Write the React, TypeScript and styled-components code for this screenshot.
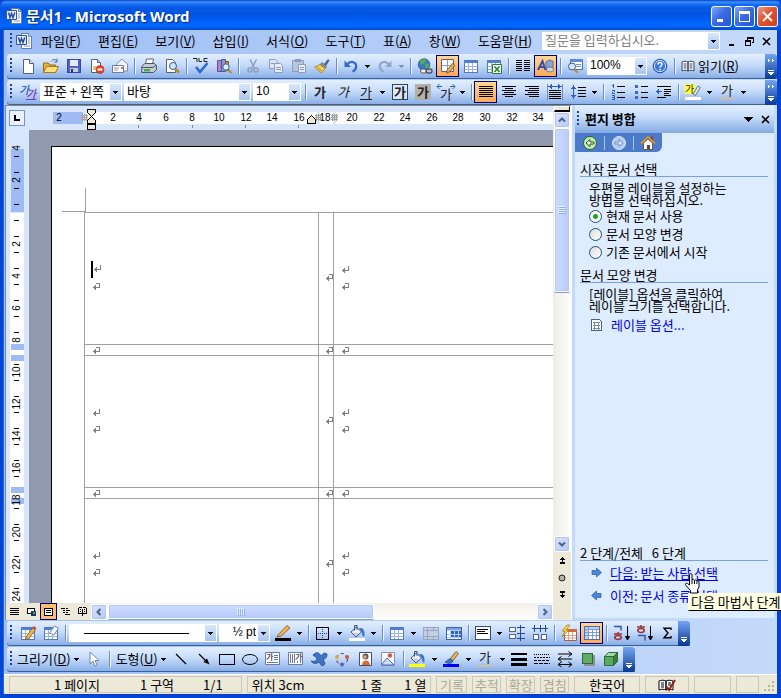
import React, { useEffect, useRef, useState } from "react";
import styled, { createGlobalStyle, css } from "styled-components";

const UI = `"Noto Sans CJK KR", "Liberation Sans", sans-serif`;
const LATIN = `"Liberation Sans", "Noto Sans CJK KR", sans-serif`;

const GlobalStyle = createGlobalStyle`
  html, body { margin: 0; padding: 0; overflow: hidden; }
  *, *::before, *::after { box-sizing: border-box; }
  body { font-family: ${UI}; font-size: 13px; line-height: 16px; color: #000; }
  button, input, select { font: inherit; color: inherit; margin: 0; padding: 0; }
  svg { flex: none; }
`;

/* ---------- window ---------- */

const Frame = styled.div`
  height: 100vh;
  display: flex;
  flex-direction: column;
  overflow: hidden;
  background: #0046d5;
`;

const TitleBar = styled.header`
  flex: none;
  height: 30px;
  display: flex;
  align-items: center;
  gap: 4px;
  padding: 2px 5px 0 6px;
  border-radius: 7px 7px 0 0;
  background: linear-gradient(180deg, #0a3fc4 0, #3b93ff 2px, #1a6ff5 4px, #0558e3 8px, #0054e3 14px, #0062fb 22px, #0068ff 26px, #0148cf 30px);
`;

const Title = styled.h1`
  flex: 1;
  margin: 0;
  font: 700 15px/20px "Noto Sans", ${UI};
  color: #fff;
  text-shadow: 1px 1px 1px #0a2a80;
  white-space: nowrap;
`;

const CaptionButton = styled.button<{ $close?: boolean }>`
  width: 21px;
  height: 21px;
  margin-right: -2px;
  border: 1px solid #fff;
  border-radius: 3px;
  display: grid;
  place-items: center;
  background: ${(p) =>
    p.$close
      ? "linear-gradient(135deg,#f09a84 0,#e4532f 45%,#cf3f1c 100%)"
      : "linear-gradient(135deg,#7fa6f5 0,#3a6ce5 45%,#2456d8 100%)"};
`;

const Client = styled.div`
  flex: 1;
  min-height: 0;
  display: flex;
  flex-direction: column;
  margin: 0 4px 4px;
  background: linear-gradient(90deg, #9ebef5, #c4dafa);
  box-shadow: -1px 0 0 #1a6af0, 1px 0 0 #0a3fd0, 0 1px 0 #0838c8;
`;

/* ---------- bars ---------- */

const MenuBar = styled.nav`
  flex: none;
  height: 24px;
  display: flex;
  align-items: center;
  padding: 0 2px 2px 4px;
`;

const Grip = styled.span`
  flex: none;
  width: 3px;
  height: 16px;
  margin: 0 3px 0 2px;
  background: radial-gradient(circle at 1px 1px, #27417f 1px, transparent 1px) 0 0 / 3px 4px;
`;

const MenuItem = styled.button`
  flex: none;
  height: 20px;
  border: 0;
  padding: 0 8px 0 9px;
  background: none;
  white-space: nowrap;
`;

const Ask = styled.div`
  flex: 1;
  max-width: 178px;
  height: 18px;
  margin: 0 4px 0 auto;
  display: flex;
  background: #fff;
`;

const AskInput = styled.input`
  flex: 1;
  min-width: 0;
  border: 0;
  padding: 0 3px 2px;
  background: transparent;
  &::placeholder { color: #808080; opacity: 1; }
`;

const DropButton = styled.button`
  width: 11px;
  border: 0;
  margin: 1px;
  background: linear-gradient(#d8e8fd, #a9c5f0);
  display: grid;
  place-items: center;
`;

const ChildButton = styled.button`
  width: 17px;
  height: 16px;
  border: 0;
  background: none;
  display: grid;
  place-items: center;
`;

const Docks = styled.div`
  flex: none;
  display: flex;
  flex-direction: column;
  align-items: flex-start;
  gap: 1px;
`;

const BottomDocks = styled(Docks)`
  padding: 1px 0 2px;
`;

const Toolbar = styled.div<{ $wide?: boolean }>`
  height: 25px;
  margin-left: 3px;
  display: flex;
  align-items: stretch;
  align-self: ${(p) => (p.$wide ? "stretch" : "flex-start")};
  border-radius: 3px 0 0 3px;
  background: linear-gradient(#e3effe 0, #c9defb 40%, #a3c2f0 75%, #83aae4 100%);
  box-shadow: inset 0 -1px 0 #3b619c;
`;

const Tools = styled.div`
  display: flex;
  align-items: center;
  padding-bottom: 1px;
  padding-left: 1px;
`;

const Tool = styled.button<{ $on?: boolean }>`
  flex: none;
  width: 23px;
  height: 22px;
  border: 1px solid transparent;
  background: none;
  display: grid;
  place-items: center;
  ${(p) =>
    p.$on &&
    css`
      border-color: #000080;
      background: linear-gradient(#ffd794, #fda85a);
    `}
`;

const CaretTool = styled.button`
  flex: none;
  width: 11px;
  height: 22px;
  border: 0;
  background: none;
  display: grid;
  place-items: center;
`;

const Sep = styled.span`
  flex: none;
  width: 2px;
  height: 16px;
  margin: 0 1px 0 3px;
  border-left: 1px solid #6a8ccb;
  border-right: 1px solid #f1f9ff;
`;

const TextTool = styled.button<{ $lead?: boolean }>`
  flex: none;
  display: flex;
  align-items: center;
  gap: 3px;
  height: 22px;
  padding: 0 4px 0 ${(p) => (p.$lead ? 1 : 4)}px;
  border: 0;
  background: none;
  white-space: nowrap;
`;

const Overflow = styled.button`
  flex: none;
  width: 12px;
  margin-left: auto;
  border: 0;
  border-radius: 0 3px 3px 0;
  background: linear-gradient(#75a6f1, #3f6fc4 50%, #053995);
  display: grid;
  place-items: end center;
  padding-bottom: 2px;
`;

const Combo = styled.label<{ $w: number }>`
  flex: none;
  width: ${(p) => p.$w}px;
  height: 18px;
  margin: 0 1px;
  display: grid;
  grid-template-columns: 1fr 13px;
  background: #fff;
`;

const Select = styled.select<{ $small?: boolean; $end?: boolean }>`
  grid-area: 1 / 1 / 2 / 3;
  appearance: none;
  width: 100%;
  height: 18px;
  border: 0;
  padding: 0 14px 3px 3px;
  background: transparent;
  ${(p) => p.$small && css`font-family: ${LATIN}; font-size: 12px;`}
  ${(p) => p.$end && css`text-align-last: right;`}
`;

const ComboArrow = styled.span`
  grid-area: 1 / 2;
  margin: 1px;
  display: grid;
  place-items: center;
  pointer-events: none;
  background: linear-gradient(#d8e8fd, #a9c5f0);
`;

const ComboLine = styled.span`
  grid-area: 1 / 1;
  align-self: center;
  height: 1px;
  margin: 0 15px;
  background: #000;
  pointer-events: none;
`;

/* ---------- icons ---------- */

const Svg = ({ children, w = 16, h = 16, soft }: { children: React.ReactNode; w?: number; h?: number; soft?: boolean }) => (
  <svg width={w} height={h} viewBox={`0 0 ${w} ${h}`} fill="none" shapeRendering={soft ? "auto" : "crispEdges"} aria-hidden="true" display="block" overflow="visible">
    {children}
  </svg>
);

const Caret = ({ c = "#000" }: { c?: string }) => (
  <svg width="5" height="3" viewBox="0 0 5 3" shapeRendering="crispEdges" aria-hidden="true" display="block">
    <path d="M0 0h5v1H0zM1 1h3v1H1zM2 2h1v1H2z" fill={c} />
  </svg>
);

const WordIcon = () => (
  <Svg soft>
    <path d="M5.500 .5h7l3 3v12h-10z" fill="#fff" stroke="#5e7bb5" />
    <path d="M12.500 .5v3h3" fill="#cfdcf3" stroke="#5e7bb5" />
    <path d="M12 6h2M12 8h2M12 10h2M8 13h6" stroke="#7d97c8" />
    <path d="M.5 2.500h10v9H.5z" fill="#e4ecfa" stroke="#33539b" />
    <path d="M2.500 4.500 4 9.500 5.500 5.500 7 9.500 8.800 4.500" stroke="#2a4c9e" strokeWidth="1.500" />
  </Svg>
);

const Ga = ({ bold, italic, under, box, shade, bar }: { bold?: boolean; italic?: boolean; under?: boolean; box?: boolean; shade?: boolean; bar?: string }) => (
  <Svg soft>
    {box && <rect x=".5" y=".5" width="15" height="15" fill="#dce9fb" stroke="#33415f" />}
    {shade && <rect width="16" height="16" fill="#b3b0ab" />}
    {bar && <rect x="0" y="13" width="16" height="3" fill={bar} />}
    <text x="2" y={bar ? 11 : 13} fontSize="13" fontFamily={UI} fontWeight={bold ? 700 : 400} fontStyle={italic ? "italic" : "normal"} fill="#222">가</text>
    {under && <path d="M2 15.500h12" stroke="#222" />}
  </Svg>
);

const Lines = ({ rows }: { rows: [number, number][] }) => (
  <Svg>
    {rows.map(([x, w], i) => <rect key={i} x={x} y={2 + i * 2} width={w} height="1" fill="#000" />)}
  </Svg>
);

const tableBase = (
  <>
    <rect x="1.500" y="2.500" width="13" height="12" fill="#fff" stroke="#5479bd" />
    <path d="M1 3h14v2H1z" fill="#4d7fd8" />
    <path d="M2 8.500h12M2 11.500h12M5.500 5v9M9.500 5v9" stroke="#9bb5e2" />
  </>
);

const bucket = (
  <>
    <path d="m2 7 5.500-5 5 5-5.500 5z" fill="#eef3fb" stroke="#3b4f7a" />
    <path d="m4 7.500 6 .5-3 3z" fill="#b9c9e6" />
    <path d="M5.500 5.500v-5h2.500V5" stroke="#3b4f7a" />
    <path d="M10 3c4-.5 6 2 5.500 8-1 1-2.500.5-2.500-3z" fill="#3c77cf" />
  </>
);

const I: Record<string, React.ReactNode> = {
  fresh: <Svg soft><path d="M3.500 1.500h6l4 4v10h-10z" fill="#fff" stroke="#51617f" /><path d="M9.500 1.500v4h4" fill="#d3dff2" stroke="#51617f" /></Svg>,
  open: <Svg soft><path d="M.5 14V5h5l1 2h6v7z" fill="#e9b53f" stroke="#9a6a12" /><path d="m.5 14.500 3-6h12l-3 6z" fill="#ffdf7b" stroke="#a87717" /><path d="M8 3.500C10 .8 12 1 14 3m0-2.500V4h-3" stroke="#4c6ba8" /></Svg>,
  save: <Svg><path d="M1.500 1.500h13v13h-13z" fill="#5563c4" stroke="#3a4699" /><path d="M4 2h8v6H4z" fill="#e5ebfa" /><path d="M4 10h8v4H4z" fill="#c7cbe2" /><path d="M5 11h2v3H5z" fill="#28337e" /></Svg>,
  perm: <Svg soft><path d="M2.500 1.500h6l3 3v10h-9z" fill="#fff" stroke="#51617f" /><path d="M8.500 1.500v3h3" fill="#d3dff2" stroke="#51617f" /><path d="M4 9h3M4 11h3" stroke="#e0a948" strokeWidth="1.500" /><circle cx="11" cy="11.500" r="4" fill="#e3482a" stroke="#a3240e" strokeWidth=".6" /><path d="M8.500 11.500h5" stroke="#fff" strokeWidth="2" /></Svg>,
  mail: <Svg soft><path d="m4.500 6 5.500-5 5.500 5v7h-11z" fill="#eef2fb" stroke="#8190b0" /><path d="M.5 7.500h11v7H.5z" fill="#fff" stroke="#6d7d9e" /><path d="M2 10h5M2 12h4" stroke="#8a9bbf" /><path d="M9 9h2v2H9z" fill="#c46a5a" /></Svg>,
  print: <Svg soft><path d="m4.500 6 1-5h7l-1 5z" fill="#fff" stroke="#58667f" /><path d="m.8 8.500 3-3h9.500l2.200 2v4l-3 3H.8z" fill="#c5cbd6" stroke="#4a5568" /><path d="M1 9.500h11l3-2.500" stroke="#4a5568" /><path d="M3 11h6v2.500H3z" fill="#4caf43" /></Svg>,
  preview: <Svg soft><path d="M2.500 1.500h6l3 3v10h-9z" fill="#fff" stroke="#51617f" /><circle cx="9" cy="8" r="3.500" fill="#cfe6fb" stroke="#3e5c8a" /><path d="m11.500 11 3.500 3.500" stroke="#c4862d" strokeWidth="2.500" /></Svg>,
  spell: <Svg soft><path d="M0 .5h4V4M6 0v3.500h3M14.500 .5H11v3h3.500" stroke="#222" /><path d="m3 9 4 5 7.500-9" stroke="#2f66c9" strokeWidth="2.500" /></Svg>,
  research: <Svg soft><path d="M1.500 2.500h4v11h-4z" fill="#b183c4" stroke="#6e4a88" /><path d="M5.500 1.500h4v12h-4z" fill="#7f9be0" stroke="#3e5aa0" /><path d="M9.500 3.500h3v9h-3z" fill="#d2964a" stroke="#825218" /><circle cx="10" cy="9" r="3.200" fill="#dbeefe" stroke="#3e5c8a" /><path d="m12.500 12 3 3" stroke="#c4862d" strokeWidth="2.200" /></Svg>,
  cut: <Svg soft><path d="M5 1.500 9.500 10M11.500 1.500 7 10" stroke="#8c9cbc" strokeWidth="1.500" /><circle cx="5" cy="12" r="2" stroke="#8c9cbc" strokeWidth="1.500" /><circle cx="11" cy="12" r="2" stroke="#8c9cbc" strokeWidth="1.500" /></Svg>,
  copy: <Svg soft><path d="M1.500 1.500h6l2 2v7h-8z" fill="#dbe4f3" stroke="#8c9cbc" /><path d="M6.500 5.500h6l2 2v7h-8z" fill="#e7eef9" stroke="#8c9cbc" /><path d="M8 9.500h5M8 11.500h5M3 5.500h3" stroke="#8c9cbc" /></Svg>,
  paste: <Svg soft><path d="M1.500 2.500h11v11h-11z" fill="#b8c6dd" stroke="#8c9cbc" /><path d="M4 1h6v3H4z" fill="#8c9cbc" /><path d="M7.500 6.500h7v8h-7z" fill="#e7eef9" stroke="#8c9cbc" /><path d="M9 9.500h4M9 11.500h4" stroke="#8c9cbc" /></Svg>,
  brush: <Svg soft><path d="m10 6 4-5 1.500 1.500L12 8z" fill="#4a5fa8" /><path d="m8 4.500 4.500 4-1.500 2-5-4z" fill="#8a8f9c" stroke="#555" strokeWidth=".6" /><path d="m6 6.500 5 4-3.500 4.500L.5 9z" fill="#f2cf56" stroke="#9a7416" strokeWidth=".7" /><path d="m3 9 5 4" stroke="#9a7416" strokeWidth=".7" /></Svg>,
  undo: <Svg soft><path d="M4 6.500C8 2 14 4 13 9.500c-.4 2-2 3.500-3.500 4" stroke="#3468c4" strokeWidth="2.200" /><path d="M1.500 2.500v6.500h6.500z" fill="#3468c4" /></Svg>,
  redo: <Svg soft><path d="M12 6.500C8 2 2 4 3 9.500c.4 2 2 3.500 3.500 4" stroke="#93a5c8" strokeWidth="2.200" /><path d="M14.500 2.500v6.500H8z" fill="#93a5c8" /></Svg>,
  link: <Svg soft><circle cx="7" cy="6.500" r="5.800" fill="#3d79c9" stroke="#274b86" strokeWidth=".7" /><path d="M3 3c2-2 5-2 6-1 0 3-2 2-3 4-2 1-3 0-3-3zM8 6c2-1 4 0 4 2l-3 4z" fill="#53b04a" /><rect x="3.500" y="11" width="6" height="4" rx="2" fill="#eee" stroke="#555" /><rect x="9" y="11" width="6" height="4" rx="2" stroke="#555" strokeWidth="1.300" /></Svg>,
  drawTable: <Svg soft><path d="M1.500 1.500h12v12h-12z" fill="#fff" stroke="#55658a" /><path d="M7.500 2v11M2 7.500h11" stroke="#8b9bbd" /><path d="m7 12 5.500-6.500 2.500 2-5.500 6.500-3 1z" fill="#e2ad57" stroke="#6e4316" strokeWidth=".7" /></Svg>,
  table: <Svg>{tableBase}</Svg>,
  excel: <Svg soft>{tableBase}<path d="M6.500 6.500h9v9h-9z" fill="#fff" stroke="#2d7b2f" /><path d="m8.500 8.500 5 5.500M13.500 8.500l-5 5.500" stroke="#2d8a30" strokeWidth="1.800" /></Svg>,
  columns: <Svg>{[2, 4, 6, 8, 10, 12].map((y) => <path key={y} d={`M1 ${y}.5h6M9 ${y}.5h6`} stroke="#000" />)}</Svg>,
  drawing: <Svg soft><path d="m8 4 3-2 4 1v8l-3 2-4-1z" fill="#8aa3d6" stroke="#4b5e91" strokeWidth=".8" /><path d="M0 12 4.500 3l3 9M2 9h5" stroke="#3350a4" strokeWidth="2" /><ellipse cx="12" cy="11.500" rx="3.500" ry="2.500" fill="#d5d9e2" stroke="#5d6882" strokeWidth=".8" /></Svg>,
  docMap: <Svg soft><path d="M3.500 1.500h12v10h-12z" fill="#fff" stroke="#4c6fae" /><path d="M3 1h13v3H3z" fill="#5d8add" /><path d="M9 6.500h5M9 8.500h5" stroke="#6f8fc9" /><circle cx="5" cy="8.500" r="3.500" fill="#d2e8fb" stroke="#3e5c8a" /><path d="m7.500 11.500 3 3" stroke="#c4862d" strokeWidth="2.200" /></Svg>,
  help: <Svg soft><circle cx="8" cy="8" r="6.800" fill="#3b79dc" stroke="#2451a0" /><circle cx="8" cy="8" r="5.600" stroke="#cfe1fb" /><path d="M6 6.500c0-3 4.200-2.500 4 0-.2 1.200-2 1.500-2 3M8 10.800v1.400" stroke="#fff" strokeWidth="1.500" /></Svg>,
  read: <Svg w={14} h={14} soft><path d="M1 3c2-1 4-1 6 0v9c-2-1-4-1-6 0zM13 3c-2-1-4-1-6 0v9c2-1 4-1 6 0z" fill="#fff" stroke="#35405c" /><path d="M2.500 5h3M2.500 7h3M2.500 9h3M8.500 5h3M8.500 7h3M8.500 9h3" stroke="#35405c" /></Svg>,
  styles: <Svg w={18} soft><text x="0" y="10" fontSize="11" fontStyle="italic" fontWeight="500" fontFamily={UI} fill="#2c5fc4">가</text><text x="7" y="14" fontSize="11" fontStyle="italic" fontWeight="500" fontFamily={UI} fill="#7d3bb5">가</text><path d="M7 15.500h10" stroke="#7d3bb5" /></Svg>,
  bold: <Ga bold />,
  italic: <Ga italic />,
  under: <Ga under />,
  box: <Ga bold box />,
  shade: <Ga bold shade />,
  scale: <Svg soft><text x="2" y="15" fontSize="13" fontFamily={UI} fill="#222">가</text><path d="M-1 2.500h5M1.500 0-1 2.500 1.500 5M12 2.500h5M14.500 0 17 2.500 14.500 5" stroke="#2c5fc4" /></Svg>,
  justify: <Lines rows={[[1, 14], [1, 14], [1, 14], [1, 14], [1, 14], [1, 14]]} />,
  center: <Lines rows={[[1, 14], [4, 8], [1, 14], [3, 10], [1, 14], [4, 8]]} />,
  right: <Lines rows={[[1, 14], [5, 10], [1, 14], [4, 11], [1, 14], [5, 10]]} />,
  spread: <Svg><path d="M.5 0v16M15.500 0v16" stroke="#7a8cb5" /><path d="M1 2.500h14M3.500 1v3M12.500 1v3M4.500 0v5M11.500 0v5" stroke="#2c5fc4" /><path d="M2 6.500h12M2 8.500h12M2 10.500h12M2 12.500h12M2 14.500h12" stroke="#000" /></Svg>,
  spacing: <Svg><path d="M3.500 1v14M1 4.500h5M2 3.500h3M1 11.500h5M2 12.500h3" stroke="#2c5fc4" /><path d="M8 3.500h8M8 6.500h8M8 9.500h8M8 12.500h8" stroke="#000" /></Svg>,
  numbers: <Svg><path d="M3.500 0v4M2 1.500h1M2 6.500h3M2 9.500h3M4.500 6v2M2.500 8v1M2 11.500h3M2 13.500h3M2 15.500h3M4.500 11v4" stroke="#2c5fc4" /><path d="M7 2.500h8M7 8.500h8M7 13.500h8" stroke="#000" /></Svg>,
  bullets: <Svg><path d="M2 1h3v3H2zM2 7h3v3H2zM2 12h3v3H2z" fill="#3a68c0" /><path d="M8 2.500h7M8 8.500h7M8 13.500h7" stroke="#000" /></Svg>,
  indent: <Svg><path d="M1 2.500h14M8 5.500h7M8 7.500h7M8 9.500h5M8 11.500h7M1 13.500h9" stroke="#000" /><path d="M0 7.500h6M1 6.500h2M1 8.500h2M2 5.500h1M2 9.500h1" stroke="#2c5fc4" /></Svg>,
  highlight: <Svg soft><rect width="10" height="10" fill="#ffff3c" /><text x="0" y="9" fontSize="10" fontFamily={UI} fill="#222">가</text><path d="m8 10 5-8 2.500 1.500-5 8z" fill="#dfe5ee" stroke="#4a5568" strokeWidth=".8" /><path d="M0 13h16v3H0z" fill="#fff" /></Svg>,
  fontColor: <Ga bar="#c0c0c0" />,
  tablePencil: <Svg soft>{tableBase}<path d="m6 12 6.500-9 2.800 2-6.500 8.500-3.300 1z" fill="#f0b64a" stroke="#7a4d18" strokeWidth=".7" /><path d="m12.500 3 1.300-2 2.700 2-1.200 2z" fill="#c9503a" /></Svg>,
  tableEraser: <Svg soft>{tableBase}<path d="m6.500 8 5-7 4 2-4.500 7z" fill="#f4f6fa" stroke="#7d8ba8" /></Svg>,
  pen: <Svg soft><path d="m3 10 9-9.500 3 2.500-9 8-4 1z" fill="#f0b64a" stroke="#7a4d18" strokeWidth=".8" /><path d="M0 13h16v3H0z" fill="#000" /></Svg>,
  borders: <Svg><path d="M1.500 2.500h12v12h-12z" stroke="#000" /><path d="M7.500 4v10M3 8.500h10" stroke="#33415f" strokeDasharray="1 1" /></Svg>,
  bucketWhite: <Svg soft>{bucket}<path d="M0 13h16v3H0z" fill="#fff" /></Svg>,
  bucketYellow: <Svg soft>{bucket}<path d="M0 13h16v3H0z" fill="#ff0" /></Svg>,
  merge: <Svg><path d="M.5 2.500h15v12H.5z" fill="#c3cee2" stroke="#98a6c2" /><path d="M1 5.500h14M1 11.500h14M4.500 3v11M10.500 3v2M10.500 12v2" stroke="#98a6c2" /></Svg>,
  split: <Svg><path d="M.5 2.500h15v12H.5z" fill="#fff" stroke="#3c5fa8" /><path d="M1 3h14v2H1z" fill="#7fa3e6" /><path d="M5 6h10v6H5z" fill="#2e62c2" /><path d="M1 5.500h14M1 9.500h14M1 12.500h14M4.500 5v9M8.500 5v9M12.500 5v9" stroke="#b9cdf2" /></Svg>,
  align: <Svg><path d="M.5 1.500h15v13H.5z" fill="#fff" stroke="#3c4c70" /><path d="M2 4.500h11M2 6.500h8M2 8.500h11" stroke="#000" /></Svg>,
  distRows: <Svg><path d="M.5 2.500h6v4h-6zM.5 9.500h6v4h-6z" fill="#fff" stroke="#55658a" /><path d="M8 2.500h8M8 8.500h8M8 13.500h8M11.500 0v16" stroke="#234a8c" /></Svg>,
  distCols: <Svg><path d="M1.500 9.500h5v5h-5zM9.500 9.500h5v5h-5z" fill="#fff" stroke="#55658a" /><path d="M2.500 0v7M8.500 0v7M13.500 0v7M0 3.500h16" stroke="#234a8c" /></Svg>,
  wand: <Svg soft><path d="M3.500 4.500h12v11h-12z" fill="#fff" stroke="#a0603a" /><path d="M3 4h13v3H3z" fill="#d96b39" /><path d="M4 10.500h11M4 13h11M7.500 7v8M11.500 7v8" stroke="#d7a488" /><path d="M6 0 1 6h3l-3 6 7-7H5l4-5z" fill="#ffd54a" stroke="#a07a10" strokeWidth=".7" /></Svg>,
  gridlines: <Svg><path d="M.5 1.500h15v13H.5z" fill="#fff" stroke="#4d6fb0" /><path d="M1 2h14v2H1zM1 4h3v10H1z" fill="#b7cdf5" /><path d="M1 4.500h14M1 7.500h14M1 10.500h14M4.500 2v12M8.500 4v10M12.500 4v10" stroke="#7f9cd6" /></Svg>,
  sortAsc: <Svg soft><path d="M1 1.500h7v4" stroke="#3350a4" strokeWidth="1.400" /><path d="M1 9h8M5 7v2" stroke="#9c2f2f" strokeWidth="1.400" /><ellipse cx="5" cy="12.500" rx="3.200" ry="2" stroke="#9c2f2f" strokeWidth="1.600" /><path d="M14.500 1v13M12.500 11.500l2 3.500 2-3.500z" stroke="#000" fill="#000" /></Svg>,
  sortDesc: <Svg soft><path d="M1 2h8M5 0v2" stroke="#9c2f2f" strokeWidth="1.400" /><ellipse cx="5" cy="5.500" rx="3.200" ry="2" stroke="#9c2f2f" strokeWidth="1.600" /><path d="M2 10.500h7v5" stroke="#3350a4" strokeWidth="1.400" /><path d="M14.500 1v13M12.500 11.500l2 3.500 2-3.500z" stroke="#000" fill="#000" /></Svg>,
  sum: <Svg soft><path d="M12 5V3.200H5L9 8l-4 4.800h7V11" stroke="#000" strokeWidth="1.400" /></Svg>,
  pointer: <Svg soft><path d="M4 1v12l3-3 2 5 2-1-2-4.500h4z" fill="#fff" stroke="#7a89a8" /></Svg>,
  line: <Svg soft><path d="m3 3 10 10" stroke="#000" strokeWidth="1.200" /></Svg>,
  arrow: <Svg soft><path d="m3 3 7 7" stroke="#000" strokeWidth="1.200" /><path d="m13.500 13.500-6-2.500L11 7.500z" fill="#000" /></Svg>,
  rect: <Svg><path d="M.5 3.500h15v10H.5z" stroke="#000" /></Svg>,
  oval: <Svg soft><ellipse cx="8" cy="8.500" rx="7.500" ry="5" stroke="#000" /></Svg>,
  textBox: <Svg soft><path d="M.5 1.500h14v12H.5z" fill="#fff" stroke="#6b7ca4" /><text x="1" y="9" fontSize="8" fontFamily={UI} fill="#000">가</text><path d="M9 4.500h4M9 6.500h4M9 8.500h4M2 11.500h11" stroke="#6a7ca6" /></Svg>,
  vertBox: <Svg soft><path d="M.5 1.500h14v12H.5z" fill="#fff" stroke="#6b7ca4" /><text x="7" y="9" fontSize="8" fontFamily={UI} fill="#000">가</text><path d="M2.500 3v9M4.500 3v9M6.500 3v9M9.500 10v2M12.500 10v2" stroke="#6a7ca6" /></Svg>,
  wordArt: <Svg soft><path d="M0 10c4 1 6 0 6-3L2 4c3-3 6-3 7 0 1 1 3 0 4-2l3 1c0 4-2 5-4 5l2 5-3 2-3-4c-2 2-6 2-8-1z" fill="#3f74c8" stroke="#1f4384" strokeWidth=".8" /></Svg>,
  diagram: <Svg soft><circle cx="8" cy="8" r="5.500" stroke="#333" strokeDasharray="3 3" /><circle cx="3" cy="6" r="2" fill="#e3a33b" /><circle cx="13" cy="6" r="2" fill="#d2543f" /><circle cx="8" cy="13.500" r="2" fill="#5a63c4" /></Svg>,
  clip: <Svg soft><path d="M2.500 1.500h12v13h-12z" fill="#fff" stroke="#44516e" /><circle cx="8.500" cy="5.500" r="3" fill="#54585f" /><circle cx="8" cy="6" r="1.800" fill="#e2a878" /><path d="M5 14c0-6 8-6 8 0z" fill="#e0662e" /></Svg>,
  picture: <Svg soft><path d="M1.500 1.500h13v13h-13z" fill="#f5f9ff" stroke="#8494b8" /><path d="m2 13 5-6 7 7H2z" fill="#cfdcf4" stroke="#4a69b0" /><circle cx="10" cy="4.500" r="2.200" fill="#d65a3a" /></Svg>,
  lineColor: <Svg soft><path d="m7 8 6-7.500 2.500 2L10 9.500z" fill="#e3b95c" stroke="#6e4316" strokeWidth=".8" /><path d="M2 11c2 0 2-3 5-3l3 2c-1 3-5 3-8 1z" fill="#4278c8" stroke="#244a88" strokeWidth=".8" /><path d="M0 13h16v3H0z" fill="#00f" /></Svg>,
  weights: <Svg><path d="M0 2h16v2H0zM0 7h16v3H0zM0 12h16v3H0z" fill="#000" /></Svg>,
  dashes: <Svg><path d="M0 3.500h16" stroke="#000" strokeDasharray="1 1" /><path d="M0 6.500h16" stroke="#000" strokeDasharray="2 1" /><path d="M0 9.500h16" stroke="#000" strokeDasharray="3 1" /><path d="M0 12.500h16" stroke="#000" strokeDasharray="4 1" /></Svg>,
  arrows: <Svg soft><path d="M1 3h13M11.500 .5 15 3l-3.500 2.500M15 8H2M4.500 5.500 1 8l3.500 2.500M1 13.500h14M4.500 11 1 13.500 4.500 16M11.500 11l3.500 2.500-3.500 2.500" stroke="#000" /></Svg>,
  shadow: <Svg><path d="M4 4h11v11H4z" fill="#8a8f98" /><path d="M2.500 2.500h10v10h-10z" fill="#62ad66" stroke="#2d6a34" /></Svg>,
  cube: <Svg soft><path d="M1.500 5.500h9v9h-9z" fill="#5ca961" stroke="#2d6a34" /><path d="m1.500 5.500 4-4h9l-4 4z" fill="#a5d8a6" stroke="#2d6a34" /><path d="m10.500 14.500 4-4v-9l-4 4z" fill="#39803f" stroke="#2d6a34" /></Svg>,
};

/* ---------- work area ---------- */

const Work = styled.div`
  flex: 1;
  min-height: 0;
  display: flex;
`;

const DocPane = styled.section`
  flex: 1;
  min-width: 0;
  display: flex;
  flex-direction: column;
  border-top: 1px solid #8b8878;
  border-left: 1px solid #8b8878;
  margin-left: 1px;
  background: #ece9d8;
`;

const DocRow = styled.div`
  flex: 1;
  min-height: 0;
  display: flex;
`;

const DocColumn = styled.div`
  flex: 1;
  min-width: 0;
  display: flex;
  flex-direction: column;
  background: #d8e7fc;
`;

const RulerRow = styled.div`
  flex: none;
  height: 24px;
  display: flex;
  overflow: hidden;
`;

const TabButton = styled.button`
  flex: none;
  width: 16px;
  height: 16px;
  margin: 4px 28px 0 3px;
  border: 1px solid #6f93d6;
  background: #eaf2fe;
  display: grid;
  place-items: center;
`;

const RulerBand = styled.div`
  flex: 1;
  min-width: 0;
  overflow: hidden;
`;

const Canvas = styled.div`
  flex: 1;
  min-height: 0;
  display: flex;
  overflow: hidden;
`;

const SideRuler = styled.div`
  flex: none;
  width: 23px;
  overflow: hidden;
`;

const Desk = styled.div`
  flex: 1;
  min-width: 0;
  padding: 16px 0 0 22px;
  background: #9099ae;
  display: flex;
`;

const Page = styled.article`
  flex: 1;
  min-width: 0;
  border-top: 1px solid #000;
  border-left: 1px solid #000;
  background: #fff;
  overflow: hidden;
`;

const CropMark = styled.div`
  width: 24px;
  height: 24px;
  margin: 41px 0 0 10px;
  border-right: 1px solid #a0a0a0;
  border-bottom: 1px solid #a0a0a0;
`;

const Labels = styled.div`
  margin: 0 -1px 0 32px;
  display: grid;
  grid-template-columns: 234px 15px 1fr;
  grid-template-rows: 132px 11px 132px 11px 132px;
  border-top: 1px solid #a0a0a0;
  border-left: 1px solid #a0a0a0;
`;

const Cell = styled.div<{ $gutter?: boolean; $thin?: boolean }>`
  display: flex;
  flex-direction: column;
  justify-content: ${(p) => (p.$thin ? "flex-end" : "center")};
  gap: 9px;
  padding: 0 0 ${(p) => (p.$thin ? 0 : 1)}px ${(p) => (p.$gutter ? 6 : 7)}px;
  border-right: 1px solid #a0a0a0;
  border-bottom: 1px solid #a0a0a0;
  overflow: hidden;
`;

const CaretLine = styled.div`
  height: 17px;
  margin: -5px 0 -4px -1px;
  border-left: 2px solid #000;
  display: flex;
  align-items: center;
`;

const Mark = ({ hook }: { hook?: boolean }) => (
  <Svg w={8} h={8}>
    <path d={hook ? "M4 .5h3M7.500 0v4M1 4.500h7M2.500 3v3M3.500 2v5" : "M7.500 0v4M1 4.500h7M2.500 3v3M3.500 2v5"} stroke="#808080" />
  </Svg>
);

const ScrollColumn = styled.div`
  flex: none;
  width: 18px;
  display: flex;
  flex-direction: column;
  align-items: center;
  background: linear-gradient(90deg, #eeede5, #fdfdfa);
`;

const SplitBox = styled.div`
  width: 16px;
  height: 6px;
  border: 1px solid #fff;
  border-right-color: #000;
  border-bottom: 2px solid #000;
  background: #ece9d8;
`;

const ScrollButton = styled.button`
  flex: none;
  width: 16px;
  height: 16px;
  border: 1px solid #fff;
  border-radius: 2px;
  background: linear-gradient(135deg, #dbe6ff, #b4c8f6);
  box-shadow: inset 0 0 0 1px #b0c5f5;
  display: grid;
  place-items: center;
`;

const Thumb = styled.div<{ $flat?: boolean }>`
  border: 1px solid #fff;
  border-radius: 2px;
  background: ${(p) => (p.$flat ? "linear-gradient(#cddbff,#b9cbfb)" : "linear-gradient(90deg,#cddbff,#b9cbfb)")};
  box-shadow: inset 0 0 0 1px #b5c8f6, 0 1px 0 #7d9de0;
  display: grid;
  place-items: center;
  ${(p) => (p.$flat ? css`flex: 0 1 266px; height: 15px;` : css`flex: 0 1 164px; width: 16px;`)}
`;

const Spacer = styled.div`
  flex: 1;
`;

const Browse = styled.div`
  width: 100%;
  height: 51px;
  background: #ece9d8;
  display: flex;
  flex-direction: column;
  align-items: center;
  justify-content: space-around;
`;

const BrowseButton = styled.button`
  border: 0;
  background: none;
  width: 16px;
  height: 16px;
  display: grid;
  place-items: center;
`;

const ViewBar = styled.div`
  flex: none;
  height: 17px;
  display: flex;
  align-items: center;
  padding-right: 18px;
`;

const ViewButton = styled.button<{ $on?: boolean }>`
  flex: none;
  width: 17px;
  height: 17px;
  border: 1px solid ${(p) => (p.$on ? "#000080" : "transparent")};
  background: ${(p) => (p.$on ? "#fdbe6f" : "none")};
  display: grid;
  place-items: center;
`;

const HTrack = styled.div`
  flex: 1;
  min-width: 0;
  height: 17px;
  display: flex;
  align-items: center;
  gap: 1px;
  background: linear-gradient(#f3f1ec, #fefefb);
`;

/* ---------- task pane ---------- */

const Pane = styled.aside`
  flex: none;
  width: 206px;
  padding: 0 3px 0 3px;
  display: flex;
  flex-direction: column;
  background: #c4dafa;
  border-left: 1px solid #fff;
`;

const PaneHead = styled.div`
  flex: none;
  height: 28px;
  display: flex;
  align-items: center;
  padding: 0;
  background: linear-gradient(#e3effe 0, #c9defb 40%, #84abe4 100%);
`;

const PaneTitle = styled.h2`
  flex: 1;
  margin: 0;
  padding-left: 2px;
  font-size: 13px;
  line-height: 20px;
  font-weight: 700;
`;

const PaneNav = styled.div`
  flex: none;
  align-self: flex-start;
  display: flex;
  align-items: center;
  height: 19px;
  padding: 0 2px 0 3px;
  border-radius: 0 0 6px 0;
  background: #4a7ac9;
`;

const PaneStack = styled.div`
  flex: 1;
  display: flex;
  flex-direction: column;
  background: #ddecfe;
  margin-bottom: 2px;
  min-height: 0;
`;

const NavButton = styled.button`
  width: 24px;
  height: 18px;
  border: 0;
  background: none;
  display: grid;
  place-items: center;
`;

const NavSep = styled.span`
  width: 1px;
  height: 14px;
  margin: 0 2px;
  background: #a9c4f0;
`;

const PaneBody = styled.div`
  flex: 1;
  display: flex;
  flex-direction: column;
  padding: 10px 6px 11px 5px;
`;

const SectionTitle = styled.h3`
  margin: 0;
  border-bottom: 1px solid #7ba2e0;
  font-size: 13px;
  line-height: 14px;
  font-weight: 400;
  white-space: pre;
`;

const Note = styled.p`
  margin: 5px 0 1px 9px;
  line-height: 12px;
  white-space: nowrap;
`;

const Option = styled.label`
  display: flex;
  align-items: center;
  gap: 4px;
  height: 18px;
  margin-left: 9px;
  white-space: nowrap;
`;

const Radio = styled.input`
  appearance: none;
  width: 13px;
  height: 13px;
  border: 1px solid #1c5180;
  border-radius: 50%;
  background: linear-gradient(135deg, #dcdcd7, #fff);
  &:checked {
    background: radial-gradient(circle, #21a121 0 2px, #fff 3px);
  }
`;

const Group = styled.section`
  margin-bottom: 7px;
`;

const LinkRow = styled.div`
  position: relative;
  display: flex;
  align-items: center;
  gap: 8px;
  height: 23px;
  padding-left: 11px;
  white-space: nowrap;
`;

const Link = styled.a<{ $hover?: boolean }>`
  color: #0000f0;
  text-decoration: ${(p) => (p.$hover ? "underline" : "none")};
  text-underline-offset: 2px;
`;

const Hand = styled.span`
  position: absolute;
  left: 104px;
  top: 12px;
  z-index: 3;
`;

const Tip = styled.span`
  position: absolute;
  left: 108px;
  top: 32px;
  z-index: 2;
  height: 18px;
  padding: 0 2px;
  border: 1px solid #ffffe1;
  border-bottom-color: #000;
  background: #ffffe1;
  line-height: 16px;
`;

/* ---------- status bar ---------- */

const StatusBar = styled.footer`
  flex: none;
  height: 20px;
  display: flex;
  align-items: center;
  gap: 5px;
  padding: 1px 1px 1px 5px;
  border-top: 1px solid #fff;
  background: #ece9d8;
`;

const Panel = styled.div<{ $w: number; $dim?: boolean }>`
  flex: 0 1 ${(p) => p.$w}px;
  min-width: 0;
  height: 17px;
  display: flex;
  justify-content: center;
  align-items: center;
  border: 1px solid #cbc8b9;
  line-height: 15px;
  color: ${(p) => (p.$dim ? "#aca899" : "#000")};
  white-space: nowrap;
`;

const PageInfo = styled(Panel)`
  justify-content: flex-start;
  gap: 29px;
  padding-left: 44px;
  & > :first-child { margin-right: 11px; }
`;

const PosInfo = styled(Panel)`
  justify-content: flex-start;
  gap: 22px;
  padding: 0 4px;
  & > :first-child { flex: 1; }
`;

const SizeGrip = styled.span`
  margin-left: auto;
  align-self: flex-end;
`;

/* ---------- composition ---------- */

const tool = (icon: string, label: string, on?: boolean) => (
  <Tool key={label} type="button" aria-label={label} aria-pressed={on} $on={on}>{I[icon]}</Tool>
);
const caret = (label: string, c?: string) => (
  <CaretTool type="button" aria-label={label}><Caret c={c} /></CaretTool>
);

const Picker = ({ label, w, value, small, line, end }: { label: string; w: number; value: string; small?: boolean; line?: boolean; end?: boolean }) => (
  <Combo $w={w}>
    <Select aria-label={label} $small={small} $end={end} defaultValue={value}><option>{value}</option></Select>
    {line && <ComboLine />}
    <ComboArrow><Caret /></ComboArrow>
  </Combo>
);

const More = ({ chevrons }: { chevrons?: boolean }) => (
  <Overflow type="button" aria-label="도구 모음 옵션">
    <svg width="8" height="19" viewBox="0 0 8 19" shapeRendering="crispEdges" fill="none" aria-hidden="true">
      {chevrons && <path d="M1 1h1v1h1v1H2v1H1zM5 1h1v1h1v1H6v1H5z" fill="#fff" />}
      <path d="M1 12h6v1H1zM1 14h6v1H1zM2 15h4v1H2zM3 16h2v1H3z" fill="#fff" />
    </svg>
  </Overflow>
);

const menus: [string, string][] = [
  ["파일", "F"], ["편집", "E"], ["보기", "V"], ["삽입", "I"], ["서식", "O"], ["도구", "T"], ["표", "A"], ["창", "W"], ["도움말", "H"],
];

/* Tracks an element's size so that the ruler scales are drawn only as far as they show. */
function useSize<T extends HTMLElement>() {
  const ref = useRef<T>(null);
  const [size, setSize] = useState({ width: 500, height: 472 });
  useEffect(() => {
    const el = ref.current;
    if (!el) return;
    const read = () => setSize({ width: el.clientWidth, height: el.clientHeight });
    read();
    const watch = new ResizeObserver(read);
    watch.observe(el);
    return () => watch.disconnect();
  }, []);
  return [ref, size] as const;
}

const hatch = (x: number) => (
  <g key={x}>
    <rect x={x + 2} y="6" width="3" height="12" fill="#d8e7fc" />
    <path d={`M${x} 9.500h7M${x} 11.500h7M${x} 13.500h7M${x + 1.5} 8v7M${x + 3.5} 8v7M${x + 5.5} 8v7`} stroke="#a7a294" />
  </g>
);

const TopRuler = () => {
  const [ref, { width }] = useSize<HTMLDivElement>();
  const count = Math.max(0, Math.floor((width - 40) / 26.6));
  return (
    <RulerBand ref={ref}>
      <svg width="100%" height="24" fill="none" shapeRendering="crispEdges" display="block" aria-label="가로 눈금자" role="img">
        <rect x="0" y="6" width="32" height="12" fill="#9ebcf3" />
        <rect x="32" y="6" width="100%" height="12" fill="#fff" />
        <g fontFamily={LATIN} fontSize="10" fill="#000" textAnchor="middle">
          <text x="6" y="15">2</text>
          {Array.from({ length: count }, (_, i) => (
            <text key={i} x={Math.round(33 + (i + 1) * 26.6)} y="15">{(i + 1) * 2}</text>
          ))}
        </g>
        {[85, 139, 192, 245].map((x) => <path key={x} d={`M${x}.5 19v3`} stroke="#8a8a8a" />)}
        {[28, 262, 278].map(hatch)}
        <path d="M34.500 3.500h8v3l-4 4-4-4zM34.500 17.500v-3l4-4 4 4v3z" fill="#ece9d8" stroke="#000" />
        <path d="M34.500 18.500h8v5h-8z" fill="#ece9d8" stroke="#000" />
        <path d="M254.500 17.500v-4l4-4 4 4v4z" fill="#ece9d8" stroke="#000" />
      </svg>
    </RulerBand>
  );
};

const LeftRuler = () => {
  const [ref, { height }] = useSize<HTMLDivElement>();
  const count = Math.max(0, Math.floor((height - 8) / 32) + 1);
  const ticks = Math.max(0, Math.floor((height - 26) / 16) + 1);
  return (
    <SideRuler ref={ref}>
      <svg width="23" height="100%" fill="none" shapeRendering="crispEdges" display="block" aria-label="세로 눈금자" role="img">
        <rect x="4" y="83" width="14" height="100%" fill="#fff" />
        <rect x="5" y="19" width="13" height="63" fill="#9ebcf3" />
        {[214, 225, 357, 368].map((y) => <rect key={y} x="5" y={y} width="13" height="6" fill="#9ebcf3" />)}
        {Array.from({ length: ticks }, (_, i) => 26 + i * 16)
          .filter((y) => ![218, 362].includes(y))
          .map((y) => <path key={y} d={`M8 ${y}.5h5`} stroke="#000" />)}
        <g fontFamily={LATIN} fontSize="10" fill="#000" textAnchor="middle">
          {Array.from({ length: count }, (_, i) => i - 2).filter((i) => i !== 0).map((i) => (
            <text key={i} transform={`translate(14 ${82 + i * 32}) rotate(-90)`}>{Math.abs(i * 2)}</text>
          ))}
        </g>
      </svg>
    </SideRuler>
  );
};

const Chevron = ({ turn }: { turn: number }) => (
  <Svg w={10} h={10} soft><path d="m2 6.500 3-3 3 3" stroke="#4d6185" strokeWidth="2" transform={`rotate(${turn} 5 5)`} /></Svg>
);

const bigRow = (first?: boolean) => (
  <>
    <Cell>{first ? <CaretLine><Mark /></CaretLine> : <Mark />}<Mark hook /></Cell>
    <Cell $gutter><Mark hook /></Cell>
    <Cell><Mark /><Mark hook /></Cell>
  </>
);
const thinRow = () => (
  <>
    <Cell $thin><Mark hook /></Cell>
    <Cell $thin $gutter><Mark hook /></Cell>
    <Cell $thin><Mark hook /></Cell>
  </>
);

const Step = ({ back }: { back?: boolean }) => (
  <Svg w={11} h={11} soft><path d="M1 3.500h4.500V1L10.500 5.500l-5 4.500V7.500H1z" fill="#4a86dc" stroke="#2a5cad" strokeWidth=".7" transform={back ? "rotate(180 5.500 5.500)" : undefined} /></Svg>
);

const Round = ({ dim, back }: { dim?: boolean; back?: boolean }) => (
  <Svg soft>
    <circle cx="8" cy="8" r="6.500" fill={dim ? "#b7cbef" : "#c9eab8"} stroke={dim ? "#dbe6fa" : "#1f6a22"} />
    <path d="M4 7h4V4.500L12 8l-4 3.500V9H4z" fill={dim ? "#dbe6fa" : "#fff"} stroke={dim ? "#6f8fcb" : "#1a5a1d"} transform={back ? "rotate(180 8 8)" : undefined} />
  </Svg>
);

export default function App() {
  return (
    <>
      <GlobalStyle />
      <Frame>
        <TitleBar>
          <WordIcon />
          <Title>문서1 - Microsoft Word</Title>
          <CaptionButton type="button" aria-label="최소화"><Svg w={13} h={13}><path d="M2 9h6v3H2z" fill="#fff" /></Svg></CaptionButton>
          <CaptionButton type="button" aria-label="최대화"><Svg w={13} h={13}><path d="M1 1h11v11H1zM2 4v7h9V4z" fill="#fff" fillRule="evenodd" /></Svg></CaptionButton>
          <CaptionButton type="button" aria-label="닫기" $close><Svg w={13} h={13} soft><path d="m2 2 9 9M11 2l-9 9" stroke="#fff" strokeWidth="2" /></Svg></CaptionButton>
        </TitleBar>
        <Client>
          <MenuBar aria-label="메뉴 모음">
            <Grip />
            <WordIcon />
            {menus.map(([t, k]) => <MenuItem key={k} type="button">{t}(<u>{k}</u>)</MenuItem>)}
            <Ask>
              <AskInput aria-label="질문" placeholder="질문을 입력하십시오." />
              <DropButton type="button" aria-label="질문 목록"><Caret /></DropButton>
            </Ask>
            <ChildButton type="button" aria-label="문서 최소화"><Svg w={9} h={9}><path d="M1 7h5v2H1z" fill="#000" /></Svg></ChildButton>
            <ChildButton type="button" aria-label="문서 복원"><Svg w={9} h={9}><path d="M2.500 3V1.500h6v4h-2M2 .5h7M.5 4.500h5v4h-5zM0 3.500h6" stroke="#000" /></Svg></ChildButton>
            <ChildButton type="button" aria-label="문서 닫기"><Svg w={9} h={9} soft><path d="m1 1 7 7M8 1 1 8" stroke="#000" strokeWidth="1.600" /></Svg></ChildButton>
          </MenuBar>

          <Docks>
            <Toolbar role="toolbar" aria-label="표준" $wide>
              <Tools>
                <Grip />
                {tool("fresh", "새로 만들기")}{tool("open", "열기")}{tool("save", "저장")}{tool("perm", "사용 권한")}{tool("mail", "전자 메일")}
                <Sep />
                {tool("print", "인쇄")}{tool("preview", "미리 보기")}
                <Sep />
                {tool("spell", "맞춤법")}{tool("research", "리서치")}
                <Sep />
                {tool("cut", "잘라내기")}{tool("copy", "복사")}{tool("paste", "붙여넣기")}{tool("brush", "서식 복사")}
                <Sep />
                {tool("undo", "실행 취소")}{caret("실행 취소 목록")}{tool("redo", "다시 실행")}{caret("다시 실행 목록", "#7f8fae")}
                <Sep />
                {tool("link", "하이퍼링크")}{tool("drawTable", "표 및 테두리", true)}{tool("table", "표 삽입")}{tool("excel", "Excel 삽입")}
                <Sep />
                {tool("columns", "단")}{tool("drawing", "그리기", true)}
                <Sep />
                {tool("docMap", "문서 구조")}
                <Picker label="확대/축소" w={60} value="100%" small />
                {tool("help", "도움말")}
                <Sep />
                <TextTool type="button">{I.read}<span>읽기(<u>R</u>)</span></TextTool>
              </Tools>
              <More chevrons />
            </Toolbar>
            <Toolbar role="toolbar" aria-label="서식" $wide>
              <Tools>
                <Grip />
                {tool("styles", "스타일 및 서식")}
                <Picker label="스타일" w={82} value="표준 + 왼쪽" />
                <Picker label="글꼴" w={127} value="바탕" />
                <Picker label="글꼴 크기" w={48} value="10" small />
                <Sep />
                {tool("bold", "굵게")}{tool("italic", "기울임꼴")}{tool("under", "밑줄")}{caret("밑줄 종류")}
                {tool("box", "문자 테두리")}{tool("shade", "문자 음영")}{tool("scale", "장평")}{caret("장평 목록")}
                <Sep />
                {tool("justify", "양쪽 맞춤", true)}{tool("center", "가운데 맞춤")}{tool("right", "오른쪽 맞춤")}{tool("spread", "균등 분할")}{tool("spacing", "줄 간격")}{caret("줄 간격 목록")}
                <Sep />
                {tool("numbers", "번호 매기기")}{tool("bullets", "글머리 기호")}{tool("indent", "내어쓰기")}
                <Sep />
                {tool("highlight", "강조색")}{caret("강조색 목록")}{tool("fontColor", "글꼴 색")}{caret("글꼴 색 목록")}
              </Tools>
              <More chevrons />
            </Toolbar>
          </Docks>

          <Work>
            <DocPane>
              <DocRow>
                <DocColumn>
                  <RulerRow>
                    <TabButton type="button" aria-label="탭 종류"><Svg w={8} h={8}><path d="M1 1h2v4h4v2H1z" fill="#000" /></Svg></TabButton>
                    <TopRuler />
                  </RulerRow>
                  <Canvas>
                    <LeftRuler />
                    <Desk>
                      <Page>
                        <CropMark />
                        <Labels>
                          {bigRow(true)}
                          {thinRow()}
                          {bigRow()}
                          {thinRow()}
                          {bigRow()}
                        </Labels>
                      </Page>
                    </Desk>
                  </Canvas>
                </DocColumn>
                <ScrollColumn>
                  <SplitBox />
                  <ScrollButton type="button" aria-label="위로"><Chevron turn={0} /></ScrollButton>
                  <Thumb><Svg w={8} h={8}><path d="M0 .5h7M0 2.500h7M0 4.500h7M0 6.500h7" stroke="#eef4fe" /><path d="M1 1.500h7M1 3.500h7M1 5.500h7M1 7.500h7" stroke="#8cb0f8" /></Svg></Thumb>
                  <Spacer />
                  <ScrollButton type="button" aria-label="아래로"><Chevron turn={180} /></ScrollButton>
                  <Browse>
                    <BrowseButton type="button" aria-label="이전 페이지"><Svg w={7} h={8}><path d="M3 0h1v1h1v1h1v1H1V2h1V1h1zM3 3h1v2h2v1H1V5h2zM1 6h5v1H1z" fill="#000" /></Svg></BrowseButton>
                    <BrowseButton type="button" aria-label="찾아보기 개체 선택"><Svg w={8} h={8} soft><circle cx="4" cy="4" r="3" fill="#b5b2a5" stroke="#222" /></Svg></BrowseButton>
                    <BrowseButton type="button" aria-label="다음 페이지"><Svg w={7} h={8}><path d="M1 0h5v1H1zM1 1h5v1H4v2h2v1H5v1H4v1H3V6H2V5H1V4h2V2H1z" fill="#000" /></Svg></BrowseButton>
                  </Browse>
                </ScrollColumn>
              </DocRow>
              <ViewBar>
                <ViewButton type="button" aria-label="기본 보기"><Svg w={9} h={9}><path d="M0 1.500h9M0 3.500h9M0 5.500h9M0 7.500h9" stroke="#000" /></Svg></ViewButton>
                <ViewButton type="button" aria-label="웹 모양"><Svg w={9} h={9}><path d="M.5 1.500h7v5h-7z" fill="#fff" stroke="#000" /><path d="M4 4h5v5H4z" fill="#22306e" /><path d="M6 5h2v2H6z" fill="#4caf43" /></Svg></ViewButton>
                <ViewButton type="button" aria-label="인쇄 모양" $on><Svg w={9} h={9}><path d="M.5 1.500h8v7h-8z" fill="#fff" stroke="#000" /><path d="M2 3.500h5M2 5.500h5" stroke="#000" /></Svg></ViewButton>
                <ViewButton type="button" aria-label="개요"><Svg w={9} h={9}><path d="M0 1.500h4M5 1.500h2M2 3.500h2M5 3.500h4M2 5.500h2M5 5.500h2M4 7.500h5" stroke="#000" /></Svg></ViewButton>
                <ViewButton type="button" aria-label="읽기용 레이아웃"><Svg w={9} h={9}><path d="M.5 1v6M8.500 1v6M4.500 2v7M1 .5h3M5 .5h3M1 6.500h3M5 6.500h3M2 2.500h1M6 2.500h1M2 4.500h1M6 4.500h1" stroke="#000" /></Svg></ViewButton>
                <HTrack>
                  <ScrollButton type="button" aria-label="왼쪽으로"><Chevron turn={-90} /></ScrollButton>
                  <Thumb $flat><Svg w={8} h={8}><path d="M.5 0v7M2.500 0v7M4.500 0v7M6.500 0v7" stroke="#eef4fe" /><path d="M1.500 1v7M3.500 1v7M5.500 1v7M7.500 1v7" stroke="#8cb0f8" /></Svg></Thumb>
                  <Spacer />
                  <ScrollButton type="button" aria-label="오른쪽으로"><Chevron turn={90} /></ScrollButton>
                </HTrack>
              </ViewBar>
            </DocPane>

            <Pane>
              <PaneHead>
                <Grip />
                <PaneTitle>편지 병합</PaneTitle>
                <ChildButton type="button" aria-label="다른 작업창"><Svg w={9} h={5}><path d="M0 0h9v1H0zM1 1h7v1H1zM2 2h5v1H2zM3 3h3v1H3zM4 4h1v1H4z" fill="#000" /></Svg></ChildButton>
                <ChildButton type="button" aria-label="작업창 닫기"><Svg w={9} h={9} soft><path d="m1 1 7 7M8 1 1 8" stroke="#000" strokeWidth="1.600" /></Svg></ChildButton>
              </PaneHead>
              <PaneStack>
                <PaneNav>
                  <NavButton type="button" aria-label="뒤로"><Round back /></NavButton>
                  <NavSep />
                  <NavButton type="button" aria-label="앞으로"><Round dim /></NavButton>
                  <NavSep />
                  <NavButton type="button" aria-label="홈"><Svg soft><path d="M3.500 8v6.500h9V8L8 4z" fill="#fff" stroke="#6d5a3a" /><path d="M1 8.500 8 2l7 6.500" stroke="#d9922e" strokeWidth="1.800" /><path d="M11 1.500h2V5l-2-1.500z" fill="#a33b24" /><path d="M7 10h3v4H7z" fill="#5b4a35" /></Svg></NavButton>
                </PaneNav>
                <PaneBody>
                  <Group>
                    <SectionTitle>시작 문서 선택</SectionTitle>
                    <Note>우편물 레이블을 설정하는<br />방법을 선택하십시오.</Note>
                    <Option><Radio type="radio" name="start" defaultChecked />현재 문서 사용</Option>
                    <Option><Radio type="radio" name="start" />문서 모양 변경</Option>
                    <Option><Radio type="radio" name="start" />기존 문서에서 시작</Option>
                  </Group>
                  <Group>
                    <SectionTitle>문서 모양 변경</SectionTitle>
                    <Note>[레이블] 옵션을 클릭하여<br />레이블 크기를 선택합니다.</Note>
                    <LinkRow>
                      <Svg w={12} h={14}><path d="M.5 1.500h8l2 2v9H.5z" fill="#fff" stroke="#51617f" /><path d="M2 4.500h7M2 7.500h7M2 10.500h7M3.500 4v8M7.500 4v8" stroke="#7688a8" /></Svg>
                      <Link href="#label-options">레이블 옵션...</Link>
                    </LinkRow>
                  </Group>
                  <Spacer />
                  <SectionTitle>2 단계/전체   6 단계</SectionTitle>
                  <LinkRow>
                    <Step />
                    <Link href="#next" $hover>다음: 받는 사람 선택</Link>
                    <Hand>
                      <Svg w={17} h={21} soft><path d="M5.500 12V1.800c0-1.600 2.500-1.600 2.500 0V7c.5-1 2.300-.8 2.500.5.600-.9 2.200-.5 2.400.7.700-.7 2.100-.3 2.100 1V14l-1.500 3v3H6.500v-2.500L2 12.500c-1.500-2 .5-3 1.700-1.800z" fill="#fff" stroke="#000" /><path d="M8 7v4M10.500 8v3M12.900 8.500v2.500" stroke="#000" /></Svg>
                    </Hand>
                    <Tip role="tooltip">다음 마법사 단계</Tip>
                  </LinkRow>
                  <LinkRow>
                    <Step back />
                    <Link href="#previous">이전: 문서 종류 선택</Link>
                  </LinkRow>
                </PaneBody>
              </PaneStack>
            </Pane>
          </Work>

          <BottomDocks>
            <Toolbar role="toolbar" aria-label="표 및 테두리">
              <Tools>
                <Grip />
                {tool("tablePencil", "표 그리기")}{tool("tableEraser", "지우개")}
                <Sep />
                <Picker label="선 스타일" w={148} value="" line />
                <Picker label="선 두께" w={51} value="½ pt" small end />
                {tool("pen", "테두리 색")}{caret("테두리 색 목록")}
                <Sep />
                {tool("borders", "테두리")}{caret("테두리 목록")}{tool("bucketWhite", "음영 색")}{caret("음영 색 목록")}
                <Sep />
                {tool("table", "표 삽입하기")}{caret("표 삽입 목록")}{tool("merge", "셀 병합")}{tool("split", "셀 분할")}
                <Sep />
                {tool("align", "셀 맞춤")}{caret("셀 맞춤 목록")}{tool("distRows", "행 높이를 같게")}{tool("distCols", "열 너비를 같게")}
                <Sep />
                {tool("wand", "표 자동 서식")}{tool("gridlines", "눈금선 표시", true)}
                <Sep />
                {tool("sortAsc", "오름차순 정렬")}{tool("sortDesc", "내림차순 정렬")}{tool("sum", "자동 합계")}
              </Tools>
              <More />
            </Toolbar>
            <Toolbar role="toolbar" aria-label="그리기 도구">
              <Tools>
                <Grip />
                <TextTool type="button" $lead><span>그리기(<u>D</u>)</span><Caret /></TextTool>
                {tool("pointer", "개체 선택")}
                <Sep />
                <TextTool type="button"><span>도형(<u>U</u>)</span><Caret /></TextTool>
                {tool("line", "선")}{tool("arrow", "화살표")}{tool("rect", "직사각형")}{tool("oval", "타원")}{tool("textBox", "텍스트 상자")}{tool("vertBox", "세로 텍스트 상자")}
                {tool("wordArt", "WordArt")}{tool("diagram", "다이어그램")}{tool("clip", "클립 아트")}{tool("picture", "그림")}
                <Sep />
                {tool("bucketYellow", "채우기 색")}{caret("채우기 색 목록")}{tool("lineColor", "선 색")}{caret("선 색 목록")}{tool("fontColor", "글자 색")}{caret("글자 색 목록")}
                {tool("weights", "선 굵기")}{tool("dashes", "대시 스타일")}{tool("arrows", "화살표 스타일")}{tool("shadow", "그림자 스타일")}{tool("cube", "3차원 스타일")}
              </Tools>
              <More />
            </Toolbar>
          </BottomDocks>

          <StatusBar>
            <PageInfo $w={233}><span>1 페이지</span><span>1 구역</span><span>1/1</span></PageInfo>
            <PosInfo $w={185}><span>위치 3cm</span><span>1 줄</span><span>1 열</span></PosInfo>
            <Panel $w={31} $dim>기록</Panel>
            <Panel $w={29} $dim>추적</Panel>
            <Panel $w={29} $dim>확장</Panel>
            <Panel $w={29} $dim>겹침</Panel>
            <Panel $w={66}>한국어</Panel>
            <Panel $w={44}><Svg w={18} h={14} soft><path d="M1 3c2-1 5-1 7 0v9c-2-1-5-1-7 0zM15 3c-2-1-5-1-7 0v9c2-1 5-1 7 0z" fill="#fff" stroke="#000" /><path d="M3 5h3M3 7h3M3 9h3M10 5h3M10 7h3" stroke="#000" /><path d="m9 9 2 3 6-10" stroke="#a01818" strokeWidth="2" /></Svg></Panel>
            <Panel $w={37} />
            <Panel $w={23} />
            <SizeGrip><Svg w={12} h={12}><path d="M8 0h2v2H8zM4 4h2v2H4zM8 4h2v2H8zM0 8h2v2H0zM4 8h2v2H4zM8 8h2v2H8z" fill="#b8b4a2" /></Svg></SizeGrip>
          </StatusBar>
        </Client>
      </Frame>
    </>
  );
}
